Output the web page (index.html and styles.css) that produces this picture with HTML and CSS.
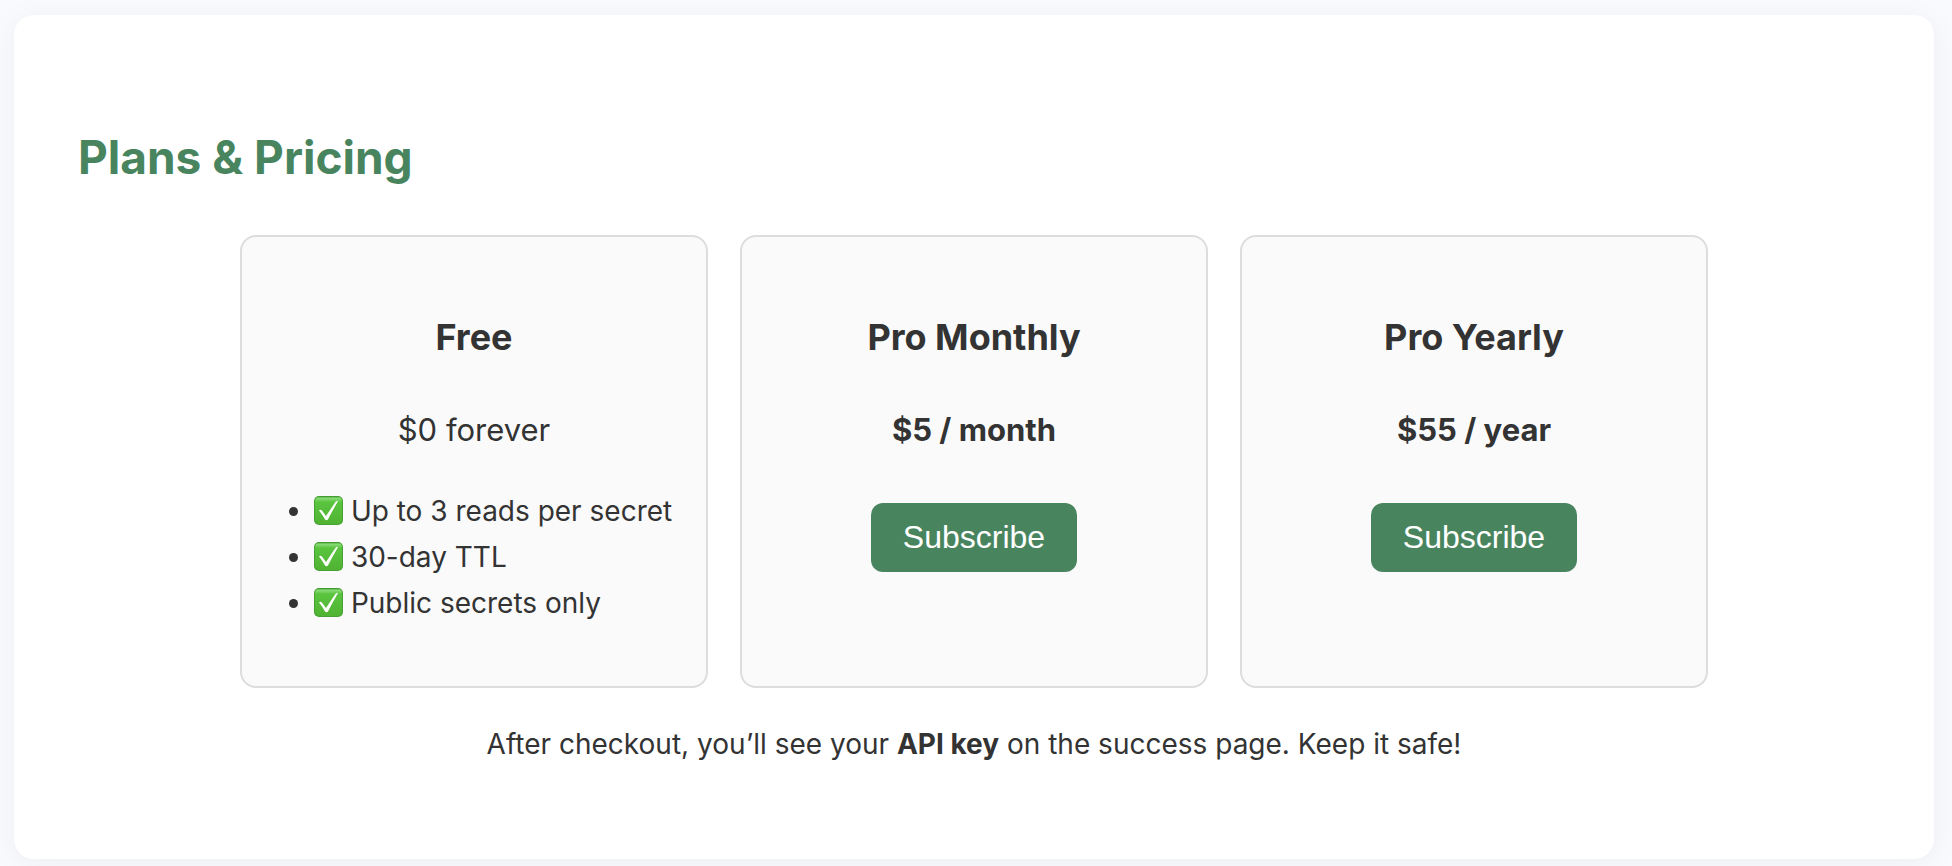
FILE: index.html
```html
<!DOCTYPE html>
<html lang="en">
<head>
    <meta charset="UTF-8">
    <meta name="viewport" content="width=device-width, initial-scale=1.0">
    <title>Plans &amp; Pricing</title>
    <link rel="stylesheet" href="styles.css">
</head>
<body>
    <!-- Check icon shared by the feature list -->
    <svg class="icon-defs" aria-hidden="true">
        <defs>
            <linearGradient id="checkFill" x1="0" y1="0" x2="0" y2="1">
                <stop offset="0" stop-color="#3f9a30"/>
                <stop offset="0.06" stop-color="#8bdc78"/>
                <stop offset="0.2" stop-color="#5ac43f"/>
                <stop offset="1" stop-color="#50b332"/>
            </linearGradient>
            <symbol id="check" viewBox="0 0 29 29">
                <rect width="29" height="29" rx="5" fill="#47a032"/>
                <rect x="1" y="0.5" width="27" height="27.5" rx="4.5" fill="url(#checkFill)"/>
                <path d="M5 14.400c1-.9 2.200-.8 2.900.2l4.100 5.500L21.200 6.300c.6-.9 1.400-1.200 2.900-1.200-3.500 5.900-6.900 12-10 18.200-.7 1.200-2.500 1.200-3.200 0C9.200 20.200 7.300 17.200 5 14.400z" fill="#fff"/>
            </symbol>
        </defs>
    </svg>

    <main class="container">
        <h1>Plans &amp; Pricing</h1>

        <div class="plans">
            <div class="plan">
                <h2>Free</h2>
                <p class="price">$0 forever</p>
                <ul class="features">
                    <li><svg class="check" role="img" aria-label="Included"><use href="#check"/></svg> Up to 3 reads per secret</li>
                    <li><svg class="check" role="img" aria-label="Included"><use href="#check"/></svg> 30-day TTL</li>
                    <li><svg class="check" role="img" aria-label="Included"><use href="#check"/></svg> Public secrets only</li>
                </ul>
            </div>

            <div class="plan">
                <h2>Pro Monthly</h2>
                <p class="price"><strong>$5 / month</strong></p>
                <button class="subscribe" type="button">Subscribe</button>
            </div>

            <div class="plan">
                <h2>Pro Yearly</h2>
                <p class="price"><strong>$55 / year</strong></p>
                <button class="subscribe" type="button">Subscribe</button>
            </div>
        </div>

        <p class="note">After checkout, you’ll see your <strong>API key</strong> on the success page. Keep it safe!</p>
    </main>
</body>
</html>
```
FILE: styles.css
```css
* {
    box-sizing: border-box;
}

body {
    font-family: Inter, "Liberation Sans", sans-serif;
    font-size: 28px;
    line-height: 46px;
    color: #333;
    background-color: #f9fafe;
    margin: 0;
    padding: 15px 18px 7px 14px;
}

.icon-defs {
    position: absolute;
    width: 0;
    height: 0;
}

.container {
    background-color: white;
    border-radius: 20px;
    padding: 64px;
    box-shadow: 0 4px 30px rgba(0, 0, 0, 0.05);
    display: flow-root;
}

h1 {
    color: #48855f;
    font-size: 46px;
    line-height: 76px;
    margin: 40px 0;
}

.plans {
    display: grid;
    grid-template-columns: repeat(auto-fit, minmax(400px, 468px));
    justify-content: center;
    gap: 32px;
}

/* Plan cards */
.plan {
    background-color: #fafafa;
    border: 2px solid #ddd;
    border-radius: 16px;
    padding: 32px;
    text-align: center;
}

.plan h2 {
    font-size: 36px;
    line-height: 60px;
    margin: 38px 0 37px;
}

.price {
    font-size: 31px;
    line-height: 52px;
    margin: 0 0 32px;
}

.features {
    text-align: left;
    margin: 0 0 28px;
    padding-left: 40px;
}

.check {
    width: 29px;
    height: 29px;
    vertical-align: -4px;
}

.subscribe {
    font-family: "Liberation Sans", Arial, sans-serif;
    font-size: 32px;
    line-height: 37px;
    color: white;
    background-color: #48855f;
    border: none;
    border-radius: 12px;
    padding: 16px 32px;
    margin-top: 15px;
    cursor: pointer;
}

.subscribe:hover {
    background-color: #3a6e4e;
}

.note {
    text-align: center;
    margin: 33px 0 28px;
}
```
